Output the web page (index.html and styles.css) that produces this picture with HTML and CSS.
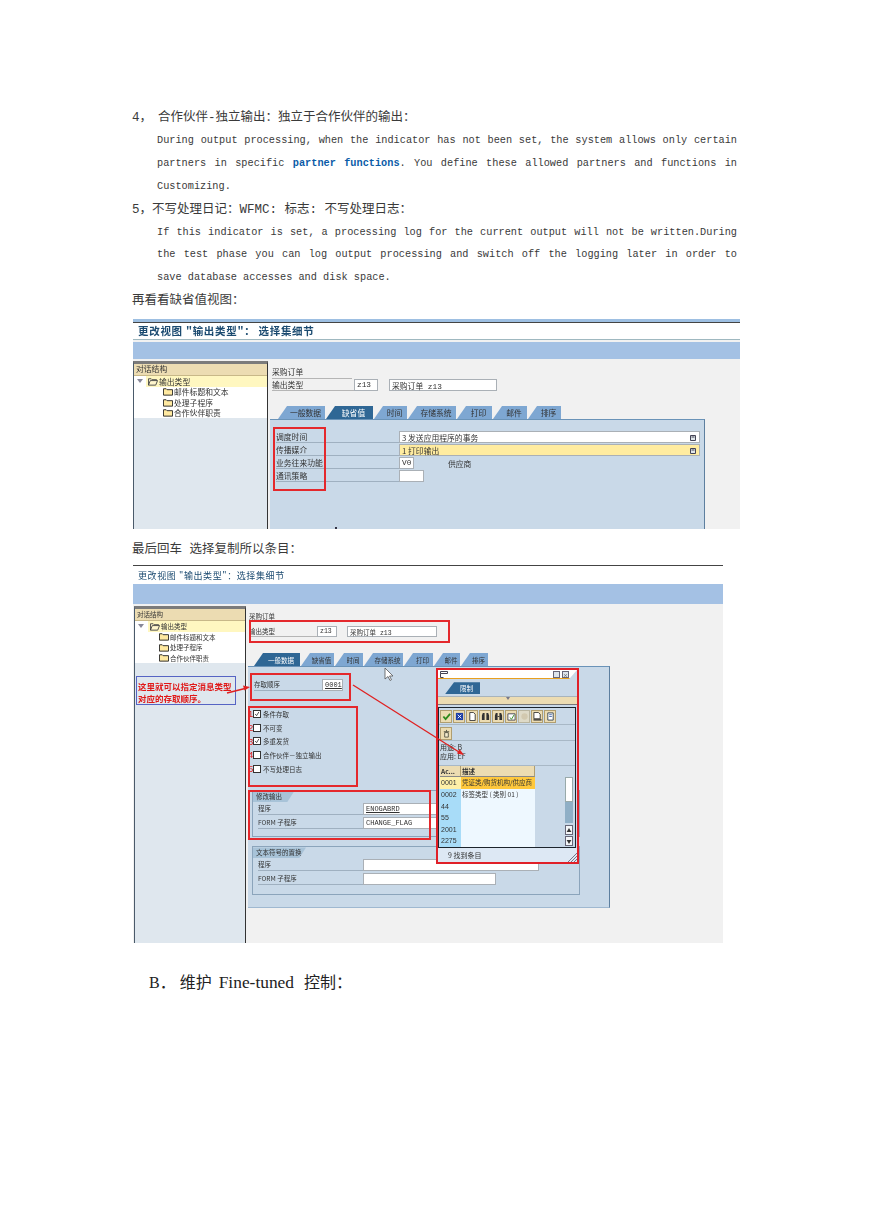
FILE: index.html
```html
<!doctype html>
<html lang="zh-CN">
<head>
<meta charset="utf-8">
<title>输出类型</title>
<link rel="stylesheet" href="styles.css">
</head>
<body>
<svg class="defs" width="0" height="0">
	<symbol id="folder" viewBox="0 0 11 9"><path d="M.5 8.5V1.5h3l1 1h6v6z" fill="#ffe9a0" stroke="#222"/></symbol>
	<symbol id="open-folder" viewBox="0 0 11 9"><path d="M.5 8.5V1.5h3l1 1h5v1M.5 8.5l2-5h8l-2 5z" fill="#fff6cc" stroke="#444"/></symbol>
	<symbol id="drop" viewBox="0 0 6 6"><path d="M.5.5h5v5h-5z" fill="#dfe6ea" stroke="#445"/><path d="M1.5 2h3" stroke="#445"/></symbol>
	<symbol id="tick" viewBox="0 0 8 8"><path d="M1.5 4l2 2.2 3-5" fill="none" stroke="#222" stroke-width="1"/></symbol>
</svg>

<div class="page">
	<p class="line"><span class="num">4，</span>合作伙伴-独立输出：独立于合作伙伴的输出：</p>
	<div class="para">
		<p class="full">During output processing, when the indicator has not been set, the system allows only certain</p>
		<p class="full">partners in specific <a class="term">partner functions</a>. You define these allowed partners and functions in</p>
		<p>Customizing.</p>
	</div>
	<p class="line">5，不写处理日记：WFMC: 标志: 不写处理日志：</p>
	<div class="para">
		<p class="full">If this indicator is set, a processing log for the current output will not be written.During</p>
		<p class="full">the test phase you can log output processing and switch off the logging later in order to</p>
		<p>save database accesses and disk space.</p>
	</div>
	<p class="line">再看看缺省值视图：</p>

	<!-- 缺省值 screenshot -->
	<div class="shot shot-a">
		<div class="stripe"></div>
		<div class="shot-title">更改视图 "输出类型"： 选择集细节</div>
		<div class="shot-bar"></div>
		<div class="shot-body">
			<div class="tree">
				<div class="tree-head">对话结构</div>
				<div class="tree-row root"><i class="arrow"></i><span class="hl"><svg class="fld"><use href="#open-folder"/></svg>输出类型</span></div>
				<div class="tree-row sub"><svg class="fld"><use href="#folder"/></svg>邮件标题和文本</div>
				<div class="tree-row sub"><svg class="fld"><use href="#folder"/></svg>处理子程序</div>
				<div class="tree-row sub"><svg class="fld"><use href="#folder"/></svg>合作伙伴职责</div>
				<div class="tree-rest"></div>
			</div>
			<div class="detail">
				<div class="order">采购订单</div>
				<div class="head-row">
					<span class="head-label">输出类型</span>
					<span class="box code">z13</span>
					<span class="box name">采购订单 z13</span>
				</div>
				<div class="tabs">
					<span class="tab">一般数据</span>
					<span class="tab on">缺省值</span>
					<span class="tab">时间</span>
					<span class="tab">存储系统</span>
					<span class="tab">打印</span>
					<span class="tab">邮件</span>
					<span class="tab">排序</span>
				</div>
				<div class="panel">
					<div class="field"><span class="lbl">调度时间</span><span class="box sel">3 发送应用程序的事务<svg class="dd"><use href="#drop"/></svg></span></div>
					<div class="field"><span class="lbl">传播媒介</span><span class="box sel req">1 打印输出<svg class="dd"><use href="#drop"/></svg></span></div>
					<div class="field"><span class="lbl">业务往来功能</span><span class="box fn">V0</span><span class="fn-name">供应商</span></div>
					<div class="field"><span class="lbl">通讯策略</span><span class="box strat"></span></div>
				</div>
			</div>
		</div>
		<div class="mark mark-a"></div>
		<i class="speck"></i>
	</div>

	<p class="line after-shot">最后回车 选择复制所以条目：</p>

	<!-- 一般数据 screenshot, with the search help popup on top -->
	<div class="shot shot-b">
		<div class="shot-title">更改视图 "输出类型"：选择集细节</div>
		<div class="shot-bar"></div>
		<div class="shot-body">
			<div class="tree">
				<div class="tree-head">对话结构</div>
				<div class="tree-row root"><i class="arrow"></i><span class="hl"><svg class="fld"><use href="#open-folder"/></svg>输出类型</span></div>
				<div class="tree-row sub"><svg class="fld"><use href="#folder"/></svg>邮件标题和文本</div>
				<div class="tree-row sub"><svg class="fld"><use href="#folder"/></svg>处理子程序</div>
				<div class="tree-row sub"><svg class="fld"><use href="#folder"/></svg>合作伙伴职责</div>
				<div class="tree-rest"></div>
			</div>
			<div class="detail">
				<div class="order">采购订单</div>
				<div class="head-row">
					<span class="head-label">输出类型</span>
					<span class="box code">z13</span>
					<span class="box name">采购订单 z13</span>
				</div>
				<div class="tabs">
					<span class="tab on">一般数据</span>
					<span class="tab">缺省值</span>
					<span class="tab">时间</span>
					<span class="tab">存储系统</span>
					<span class="tab">打印</span>
					<span class="tab">邮件</span>
					<span class="tab">排序</span>
				</div>
				<div class="panel">
					<div class="access"><span class="lbl">存取顺序</span><span class="box seq">0001</span></div>
					<div class="checks">
						<label class="check"><b>1</b><span class="cb"><svg><use href="#tick"/></svg></span>条件存取</label>
						<label class="check"><b>2</b><span class="cb"></span>不可变</label>
						<label class="check"><b>3</b><span class="cb"><svg><use href="#tick"/></svg></span>多重发货</label>
						<label class="check"><b>4</b><span class="cb"></span>合作伙伴－独立输出</label>
						<label class="check"><b>5</b><span class="cb"></span>不写处理日志</label>
					</div>
					<div class="group first">
						<div class="group-head">修改输出</div>
						<div class="gfield"><span class="glbl">程序</span><span class="box long"><u>ENOGABRD</u></span></div>
						<div class="gfield"><span class="glbl">FORM 子程序</span><span class="box short">CHANGE_FLAG</span></div>
					</div>
					<div class="group">
						<div class="group-head">文本符号的置换</div>
						<div class="gfield"><span class="glbl">程序</span><span class="box long"></span></div>
						<div class="gfield"><span class="glbl">FORM 子程序</span><span class="box short"></span></div>
					</div>
				</div>
			</div>
		</div>

		<div class="callout">这里就可以指定消息类型<br>对应的存取顺序。</div>

		<div class="popup">
			<div class="pop-title">
				<svg class="pop-ico" viewBox="0 0 8 7"><path d="M.5.5h7v2h-7zM.5 2.5v4h3" fill="none" stroke="#445"/></svg>
				<span class="pop-btn"></span><span class="pop-btn">×</span>
			</div>
			<div class="pop-tabs"><span class="tab on">限制</span></div>
			<div class="pop-bar"><i></i></div>
			<div class="pop-frame">
				<div class="tools">
					<span class="tool"><svg viewBox="0 0 10 10"><path d="M1.500 5l2.500 3 5-6" fill="none" stroke="#2e8a1e" stroke-width="2"/></svg></span>
					<span class="tool"><svg viewBox="0 0 10 10"><path d="M1 1h8v8H1z" fill="#1e3fa8"/><path d="M3 3l4 4M7 3l-4 4" stroke="#fff"/></svg></span>
					<span class="tool"><svg viewBox="0 0 10 10"><path d="M2 .5h4l2 2v7H2z" fill="#fff" stroke="#333"/></svg></span>
					<span class="tool"><svg viewBox="0 0 10 10"><path d="M2 1h2v8H1V4zM6 1h2l1 3v5H6z" fill="#333"/></svg></span>
					<span class="tool"><svg viewBox="0 0 10 10"><path d="M2 1h2v8H1V4zM6 1h2l1 3v5H6z" fill="#333"/><path d="M4 5h2" stroke="#333"/></svg></span>
					<span class="tool"><svg viewBox="0 0 10 10"><path d="M1 2h8v7H1z" fill="#fff" stroke="#445"/><path d="M3 6l2 2 3-5" fill="none" stroke="#2e8a1e"/></svg></span>
					<span class="tool off"><svg viewBox="0 0 10 10"><circle cx="5" cy="5" r="3.500" fill="#d8c08a"/></svg></span>
					<span class="tool"><svg viewBox="0 0 10 10"><path d="M1 .5h5l2 2v5H1z" fill="#fff" stroke="#333"/><path d="M.5 8h9v1.500h-9z" fill="#333"/></svg></span>
					<span class="tool"><svg viewBox="0 0 10 10"><path d="M2 1h6v8H2z" fill="#fff" stroke="#345"/><path d="M3.500 3h3M3.500 5h3" stroke="#46a"/></svg></span>
				</div>
				<div class="tools second">
					<span class="tool"><svg viewBox="0 0 10 10"><path d="M3 4h4v5H3zM2 3h6M5 1v2" fill="#f4ecd0" stroke="#554"/></svg></span>
				</div>
				<div class="pop-info">用途: B<br>应用: EF</div>
				<div class="grid">
					<div class="grid-cols">
						<div class="cell-h">Ac...</div><div class="cell-h">描述</div>
						<div class="ac cur">0001</div><div class="ds cur">凭证类/购货机构/供应商</div>
						<div class="ac">0002</div><div class="ds">标签类型 ( 类别 01 )</div>
						<div class="ac">44</div><div class="ds"></div>
						<div class="ac">55</div><div class="ds"></div>
						<div class="ac">2001</div><div class="ds"></div>
						<div class="ac">2275</div><div class="ds"></div>
					</div>
					<div class="scroll">
						<span class="sc-track"></span><span class="sc-thumb"></span>
						<span class="sc-btn">▲</span><span class="sc-btn">▼</span>
					</div>
				</div>
			</div>
			<div class="pop-status">9 找到条目</div>
			<svg class="grip" viewBox="0 0 10 10"><path d="M1 10l9-9M4 10l6-6M7 10l3-3" stroke="#778"/></svg>
		</div>

		<div class="mark mark-b1"></div>
		<div class="mark mark-b2"></div>
		<div class="mark mark-b3"></div>
		<div class="mark mark-b4"></div>

		<svg class="ink" width="590" height="378">
			<path d="M94 128L112 123.500" stroke="#e02020" stroke-width="1.300"/>
			<path d="M117 122l-7-1.500 1.500 5z" fill="#e02020"/>
			<path d="M220 120L326 187" stroke="#e02020" stroke-width="1.300"/>
			<path d="M331 190l-7-1.500 2.500-4.500z" fill="#e02020"/>
			<path d="M252 103v11l3-2.500 2 4 1.500-.8-2-3.700h3.500z" fill="#fff" stroke="#555" stroke-width=".8"/>
		</svg>
	</div>

	<p class="section">B． 维护 <span class="sec-lat">Fine-tuned</span> 控制：</p>
</div>
</body>
</html>
```
FILE: styles.css
```css
/* Page setup */

body {
	margin: 0;
	background: white;
	color: #3a3a3a;
	font-family: "Liberation Mono", "Noto Sans CJK SC", monospace;
	font-size: 12px;
}

.defs { position: absolute; }

.page {
	width: 608px;
	margin-left: 132px;
	padding-top: 106px;
}

p { margin: 0; }

.line {
	height: 22.900px;
	line-height: 25px;
	font-size: 12.500px;
}

.num { margin-right: 6px; }

.para {
	width: 580px;
	margin-left: 25px;
	font-size: 10.250px;
	line-height: 22.900px;
}

/* lines of a paragraph that fill the whole width */
.full { text-align-last: justify; }

.term {
	color: #0b5ca8;
	font-weight: bold;
}

.after-shot { margin-top: 9px; }

.section {
	margin: 27px 0 0 17px;
	font-family: "Liberation Serif", "Noto Sans CJK SC", serif;
	font-size: 16px;
	line-height: 24px;
	color: #222;
}

.sec-lat { margin: 0 6px 0 3px; font-size: 17.400px; }

/* Screenshots */

.shot {
	position: relative;
	display: flex;
	flex-direction: column;
	margin-left: 1px;
	overflow: hidden;
	background: #f1f1f1;
	font-family: "Noto Sans CJK SC", sans-serif;
	color: #333;
	filter: blur(.3px);
}

.shot-a {
	width: 607px;
	height: 210px;
	margin-top: 7px;
	font-size: 7.800px;
}

.shot-b {
	width: 590px;
	height: 378px;
	margin-top: 4px;
	font-size: 6.500px;
}

.stripe { height: 3px; background: #9dbfe2; }

.shot-title {
	height: 18px;
	padding-left: 5px;
	background: white;
	border-top: 1px solid #444;
	color: #1b4a70;
	font-size: 10.500px;
	letter-spacing: .7px;
	line-height: 16px;
}

.shot-a .shot-title { height: 16px; border-bottom: 1px solid #9fb8c0; margin-bottom: 2px; font-weight: bold; }
.shot-b .shot-title { font-size: 9px; letter-spacing: .6px; line-height: 19px; }

.shot-bar { height: 17px; background: #a4c1e4; }
.shot-b .shot-bar { height: 20px; }

.shot-body { flex: 1; display: flex; min-height: 0; }

/* Left tree */

.tree {
	display: flex;
	flex-direction: column;
	width: 135px;
	margin-top: 2px;
	background: white;
	border-top: 3px solid #7b7b7b;
	border-left: 1px solid #4a5a6a;
	border-right: 1px solid #333;
	box-sizing: border-box;
}

.shot-b .tree { width: 112px; margin-left: 1px; }

.tree-head {
	height: 11px;
	padding-left: 2px;
	background: #ecdcb2;
	border-bottom: 1px solid #c8b888;
	line-height: 10px;
}

.tree-row {
	display: flex;
	align-items: center;
	height: 10.500px;
	white-space: nowrap;
}

.root { padding-left: 3px; }
.sub { padding-left: 29px; }
.shot-b .sub { padding-left: 24px; }

.arrow {
	width: 0;
	height: 0;
	margin-right: 3px;
	border: 3px solid transparent;
	border-top: 4px solid #889;
	border-bottom: 0;
}

.shot-b .arrow { margin-right: 4px; }

.hl {
	flex: 1;
	display: flex;
	align-items: center;
	height: 100%;
	padding-left: 2px;
	background: #fff7c0;
}

.fld { width: 10px; height: 9px; margin-right: 1px; }

.tree-rest { flex: 1; background: #dfe7ee; }

/* Detail area */

.detail { display: flex; flex-direction: column; margin-left: 2px; }

.order {
	width: 80px;
	height: 11px;
	margin: 8px 0 0 2px;
	border-bottom: 1px solid #b5b5b5;
	line-height: 10px;
}

.shot-b .order { margin-top: 9px; height: 7px; line-height: 7px; margin-bottom: 5px; margin-left: 1px; }

.head-row { display: flex; align-items: center; height: 12px; padding-left: 2px; }
.shot-b .head-row { padding-left: 1px; height: 11px; }

.head-label { width: 82px; border-bottom: 1px solid #b5b5b5; }
.shot-b .head-label { width: 68px; }

.box {
	display: flex;
	align-items: center;
	box-sizing: border-box;
	height: 100%;
	padding-left: 2px;
	background: white;
	border: 1px solid #aab0b6;
	white-space: nowrap;
	font-family: "Liberation Mono", "Noto Sans CJK SC", monospace;
}

.code { width: 24px; margin-right: 11px; }
.name { width: 108px; }
.shot-b .code { width: 20px; margin-right: 10px; }
.shot-b .name { width: 90px; }

/* Tabs */

.tabs {
	display: grid;
	grid-template-columns: 47px 47px 33px 48px 35px 34px 33px;
	gap: 1px;
	height: 13px;
	margin: 15px 0 0 8px;
}

.shot-b .tabs {
	grid-template-columns: 46px 33px 28px 39px 29px 26px 27px;
	margin: 16px 0 0 6px;
}

.tab {
	display: flex;
	align-items: center;
	justify-content: center;
	padding-left: 8px;
	background: #7ea7d2;
	clip-path: polygon(9px 0, 100% 0, 100% 100%, 0 100%);
	white-space: nowrap;
}

.tab.on {
	background: #2f6795;
	color: white;
}

/* Panel */

.panel {
	flex: 1;
	box-sizing: border-box;
	width: 435px;
	padding-top: 11px;
	background: #c9d9e8;
	border-top: 1px solid #6a93b8;
	border-right: 1px solid #5d7f9f;
}

.shot-b .panel {
	flex: none;
	width: 362px;
	height: 242px;
	padding-top: 12px;
	border-bottom: 1px solid #9fb8d0;
}

.field {
	display: flex;
	align-items: center;
	height: 12px;
	margin: 0 4px 1px 6px;
}

.lbl {
	width: 123px;
	border-bottom: 1px solid #9fb0c0;
	line-height: 11px;
	white-space: nowrap;
}

.sel { flex: 1; position: relative; font-family: "Noto Sans CJK SC", sans-serif; }
.req { background: #ffeca0; }
.dd { position: absolute; right: 3px; top: 3px; width: 6px; height: 6px; }
.fn { width: 15px; }
.strat { width: 25px; }
.fn-name { margin-left: 34px; }

.access {
	display: flex;
	align-items: center;
	height: 12px;
	margin-left: 6px;
}

.access .lbl { width: 68px; }
.seq { width: 21px; text-decoration: underline; font-size: 7px; }

.checks { margin-top: 16px; }

.check {
	display: flex;
	align-items: center;
	height: 13.700px;
}

.check b {
	width: 5px;
	color: #e02020;
	font-family: "Liberation Sans", sans-serif;
	font-size: 9.500px;
	font-weight: normal;
}

.cb {
	width: 8px;
	height: 8px;
	margin-right: 2px;
	background: white;
	border: 1px solid #333;
	box-sizing: border-box;
}

.cb svg { display: block; width: 6px; height: 6px; }

/* Field groups */

.group {
	box-sizing: border-box;
	width: 328px;
	height: 49px;
	margin: 9px 0 0 4px;
	border: 1px solid #8ba4bb;
}

.group.first { height: 47px; margin-top: 15px; }

.group-head {
	width: 38px;
	height: 11px;
	margin-bottom: 1px;
	padding-left: 3px;
	background: #a8c3d8;
	clip-path: polygon(0 0, 100% 0, calc(100% - 7px) 100%, 0 100%);
	line-height: 10px;
	white-space: nowrap;
}

.group:not(.first) .group-head { width: 50px; }

.gfield {
	display: flex;
	align-items: center;
	height: 12px;
	margin-bottom: 1.500px;
	padding-left: 5px;
}

.glbl {
	width: 105px;
	border-bottom: 1px solid #9fb0c0;
	line-height: 11px;
}

.long { width: 176px; font-size: 7px; }
.short { width: 133px; font-size: 7px; }

/* Things drawn over the screenshots */

.mark {
	position: absolute;
	box-sizing: border-box;
	border: 2px solid #e4282c;
}

.mark-a { left: 140px; top: 108px; width: 53px; height: 64px; }
.mark-b1 { left: 116px; top: 55px; width: 201px; height: 23px; }
.mark-b2 { left: 117px; top: 108px; width: 101px; height: 28px; }
.mark-b3 { left: 115px; top: 141px; width: 110px; height: 81px; }
.mark-b4 { left: 115px; top: 225px; width: 183px; height: 50px; }

.speck {
	position: absolute;
	left: 202px;
	bottom: 0;
	width: 2px;
	height: 2px;
	background: #334;
}

.ink { position: absolute; left: 0; top: 0; pointer-events: none; }

.callout {
	position: absolute;
	left: 3px;
	top: 111px;
	box-sizing: border-box;
	width: 100px;
	height: 29px;
	padding: 3px 0 0 1px;
	background: #dfe7ee;
	border: 1px solid #5664c4;
	color: #e01818;
	font-size: 8.500px;
	font-weight: bold;
	line-height: 12px;
	white-space: nowrap;
}

/* Search help popup */

.popup {
	position: absolute;
	left: 303px;
	top: 103px;
	display: flex;
	flex-direction: column;
	box-sizing: border-box;
	width: 143px;
	height: 196px;
	background: #c9d9e8;
	border: 2px solid #e02028;
}

.pop-title {
	display: flex;
	align-items: center;
	gap: 2px;
	height: 9px;
	padding: 0 8px 0 2px;
	background: white;
	border-bottom: 1px solid #e8a020;
	clip-path: polygon(0 0, 100% 0, calc(100% - 8px) 100%, 0 100%);
}

.pop-ico { width: 8px; height: 7px; margin-right: auto; }

.pop-btn {
	width: 5px;
	height: 5px;
	border: 1px solid #667;
	background: #dde4ea;
	font-size: 5px;
	line-height: 5px;
	text-align: center;
}

.pop-tabs {
	display: grid;
	grid-template-columns: 35px;
	height: 13px;
	margin: 3px 0 2px 7px;
}

.pop-bar {
	display: flex;
	justify-content: center;
	height: 7px;
	background: #ecdcb2;
	border-top: 1px solid #a8b4bc;
	border-bottom: 1px solid #777;
}

.pop-bar i {
	width: 0;
	height: 0;
	border: 2px solid transparent;
	border-top: 3px solid #778;
}

.pop-frame {
	display: flex;
	flex-direction: column;
	height: 142px;
	margin: 2px 1px 0 0;
	border: 1px solid #1c242c;
}

.tools {
	display: flex;
	gap: 1px;
	height: 17px;
	padding: 2px 0 0 1px;
	box-sizing: border-box;
	border-bottom: 1px solid #a8b8c6;
}

.tools.second { height: 16px; padding-top: 2px; }

.tool {
	display: flex;
	align-items: center;
	justify-content: center;
	width: 12px;
	height: 13px;
	background: #ecdcb2;
	border: 1px solid #b09e70;
	box-sizing: border-box;
}

.tool svg { width: 9px; height: 9px; }
.tool.off { opacity: .6; }

.pop-info {
	height: 25px;
	padding: 2px 0 0 1px;
	box-sizing: border-box;
	border-bottom: 1px solid #a8b8c6;
	font-size: 7px;
	line-height: 9px;
}

.grid { flex: 1; display: flex; min-height: 0; overflow: hidden; }

.grid-cols {
	display: grid;
	grid-template-columns: 21px 74px;
	grid-auto-rows: 11.600px;
	margin-left: 1px;
	margin-right: 31px;
	font-size: 6.500px;
}

.cell-h {
	background: #ecdcb2;
	border-right: 1px solid #b09e70;
	border-bottom: 1px solid #888;
	font-weight: bold;
	line-height: 10px;
	padding-left: 1px;
}

.ac, .ds { padding-left: 1px; line-height: 11.600px; white-space: nowrap; }
.ac { background: #a8dcf8; font-family: "Liberation Sans", sans-serif; font-size: 7px; }
.ds { background: #eef8ff; }
.ac.cur { background: #fff0a8; }
.ds.cur { background: #ffc83c; }

.scroll {
	display: flex;
	flex-direction: column;
	width: 8px;
	padding-top: 11px;
	margin-left: -1px;
}

.sc-track { height: 25px; background: white; border: 1px solid #9aa; box-sizing: border-box; }
.sc-thumb { height: 21px; background: #8fafc6; margin-bottom: 2px; }

.sc-btn {
	height: 10px;
	margin-bottom: 1px;
	background: #f4f6f8;
	border: 1px solid #667;
	box-sizing: border-box;
	font-size: 5px;
	line-height: 8px;
	text-align: center;
}

.pop-status {
	flex: 1;
	padding-left: 10px;
	background: #dde8f4;
	font-size: 7px;
	line-height: 14px;
}

.grip {
	position: absolute;
	right: 0;
	bottom: 0;
	width: 10px;
	height: 10px;
}
```
